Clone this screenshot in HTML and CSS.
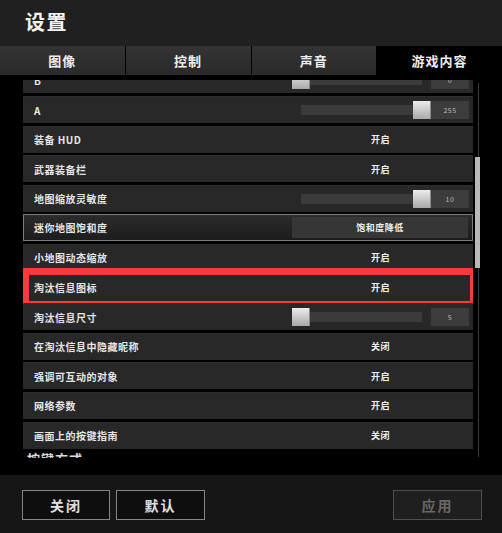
FILE: index.html
```html
<!DOCTYPE html>
<html lang="en">
<head>
  <meta charset="UTF-8" />
  <meta name="viewport" content="width=device-width, initial-scale=1.0"/>
  <title>设置</title>
  <link rel="stylesheet" href="styles.css">
</head>
<body>
  <div class="header"><h1 class="title">设置</h1></div>
  <div class="tabs">
    <div class="tab">图像</div>
    <div class="tab">控制</div>
    <div class="tab">声音</div>
    <div class="tab active">游戏内容</div>
  </div>

  <div class="main">
    <div class="viewport">
      <div class="list">
        <div class="row">
          <span class="label">B</span>
          <div class="value slider"><div class="track"><div class="knob" style="left:-9px"></div></div><div class="num">0</div></div>
        </div>
        <div class="row">
          <span class="label">A</span>
          <div class="value slider"><div class="track"><div class="knob" style="left:112px"></div></div><div class="num">255</div></div>
        </div>
        <div class="row"><span class="label">装备 HUD</span><span class="value">开启</span></div>
        <div class="row"><span class="label">武器装备栏</span><span class="value">开启</span></div>
        <div class="row">
          <span class="label">地图缩放灵敏度</span>
          <div class="value slider"><div class="track"><div class="knob" style="left:112px"></div></div><div class="num">10</div></div>
        </div>
        <div class="row row-active"><span class="label">迷你地图饱和度</span><div class="value select">饱和度降低</div></div>
        <div class="row"><span class="label">小地图动态缩放</span><span class="value">开启</span></div>
        <div class="row marked"><span class="label">淘汰信息图标</span><span class="value">开启</span></div>
        <div class="row">
          <span class="label">淘汰信息尺寸</span>
          <div class="value slider"><div class="track"><div class="knob" style="left:-9px"></div></div><div class="num">5</div></div>
        </div>
        <div class="row"><span class="label">在淘汰信息中隐藏昵称</span><span class="value">关闭</span></div>
        <div class="row"><span class="label">强调可互动的对象</span><span class="value">开启</span></div>
        <div class="row"><span class="label">网络参数</span><span class="value">开启</span></div>
        <div class="row"><span class="label">画面上的按键指南</span><span class="value">关闭</span></div>
        <div class="section">按键方式</div>
      </div>
    </div>
    <div class="scroll"><div class="scroll-thumb"></div></div>
  </div>

  <div class="footer">
    <button class="btn">关闭</button>
    <button class="btn">默认</button>
    <button class="btn apply" disabled>应用</button>
  </div>
</body>
</html>
```

FILE: styles.css
```css
body {
  margin: 0;
  width: 502px;
  height: 533px;
  overflow: hidden;
  background: #000;
  color: #e8e8e8;
  font-family: "Noto Sans CJK SC", "Noto Sans", sans-serif;
}
.header {
  height: 46px;
  box-sizing: border-box;
  padding: 0 0 3px 25px;
  display: flex;
  align-items: center;
  background: #202020;
}
.title {
  margin: 0;
  font-size: 20px;
  font-weight: bold;
  letter-spacing: 1.5px;
  color: #f2f2f2;
}
.tabs {
  display: grid;
  grid-template-columns: repeat(4, 1fr);
  gap: 1px;
  height: 29px;
  background: #000;
}
.tab {
  display: flex;
  align-items: center;
  justify-content: center;
  background: linear-gradient(#333, #2a2a2a);
  font-size: 13px;
  font-weight: bold;
  letter-spacing: 1px;
  color: #eee;
}
.tab.active {
  background: #000;
}
.main {
  display: flex;
  height: 400px;
}
.viewport {
  width: 450px;
  height: 378px;
  margin: 5px 0 0 23px;
  overflow: hidden;
}
.list {
  margin-top: -13.6px;
}
.row {
  position: relative;
  display: flex;
  align-items: center;
  height: 27px;
  box-sizing: border-box;
  margin-bottom: 2.6px;
  padding-left: 11px;
  background: #282828;
  border-top: 1px solid #2f2f2f;
}
.row-active {
  padding-left: 10px;
  border: 1px solid #7c7c7c;
  background: linear-gradient(#2b2b2b, #1d1d1d);
}
.marked::after {
  content: "";
  position: absolute;
  inset: -7px -4px -7px -1px;
  border: 7px solid #fd3a3a;
}
.label {
  flex: 1;
  font-size: 10px;
  font-weight: bold;
  letter-spacing: 0.5px;
  color: #e6e6e6;
}
.value {
  width: 177px;
  margin-right: 4px;
  text-align: center;
  font-size: 9px;
  font-weight: bold;
  letter-spacing: 0.5px;
  color: #eee;
}
.slider {
  display: flex;
  align-items: center;
  gap: 9px;
  box-sizing: border-box;
  padding-left: 9px;
}
.track {
  position: relative;
  width: 121px;
  height: 10px;
  background: #3b3b3b;
}
.knob {
  position: absolute;
  top: -4px;
  width: 18px;
  height: 18px;
  background: linear-gradient(#ececec, #a9a9a9);
  box-shadow: inset -1px 0 0 #8a8a8a;
}
.num {
  width: 38px;
  height: 18px;
  line-height: 18px;
  background: #3c3c3c;
  font-size: 7px;
  font-weight: normal;
  color: #bdbdbd;
}
.select {
  width: 176px;
  height: 21px;
  line-height: 21px;
  background: #363636;
}
.section {
  padding: 0 0 0 4px;
  line-height: 16px;
  font-size: 13px;
  font-weight: bold;
  letter-spacing: 1px;
  color: #ddd;
}
.scroll {
  width: 5px;
  height: 374px;
  margin: 8px 0 0 2px;
  background: linear-gradient(to right, transparent 3px, #3c3c3c 3px, #3c3c3c 4px, transparent 4px);
}
.scroll-thumb {
  margin-top: 74px;
  height: 111px;
  background: #b8b8b8;
}
.footer {
  display: flex;
  align-items: flex-start;
  gap: 6px;
  height: 58px;
  box-sizing: border-box;
  padding: 15px 20px 0 22px;
  background: #161616;
}
.btn {
  width: 88px;
  height: 30px;
  padding: 0;
  border: 1px solid #858585;
  background: #0e0e0e;
  color: #e0e0e0;
  font-family: inherit;
  font-size: 14px;
  font-weight: bold;
  letter-spacing: 2px;
}
.btn + .btn {
  width: 89px;
}
.btn.apply {
  margin-left: auto;
  background: #1f1f1f;
  border-color: #4f4f4f;
  color: #686868;
}
```
